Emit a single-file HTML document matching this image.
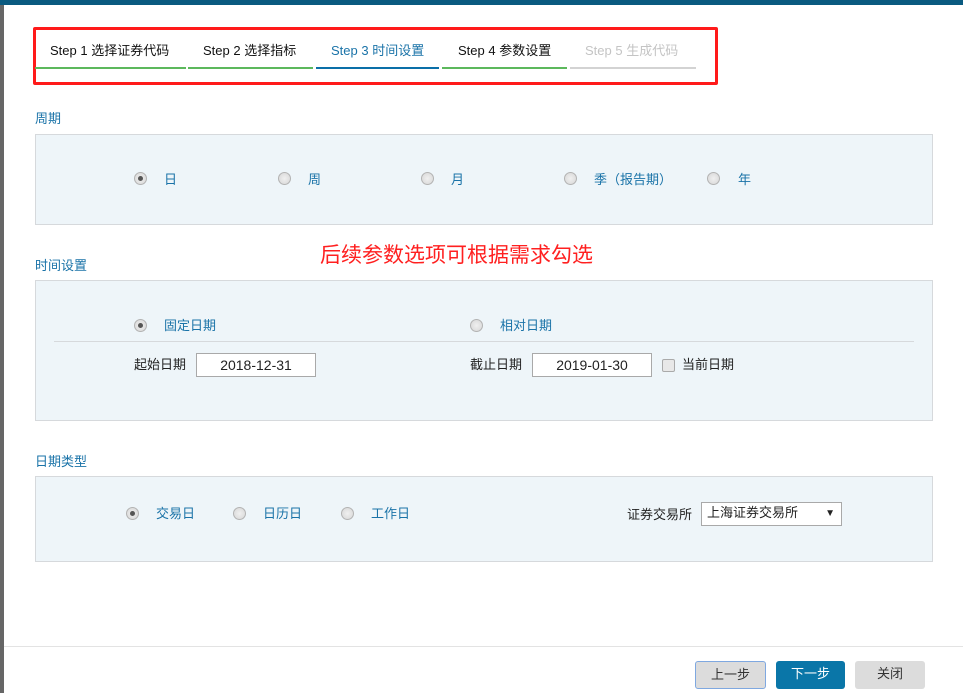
<!DOCTYPE html>
<html><head><meta charset="utf-8"><style>
*{margin:0;padding:0;box-sizing:border-box}
body{width:963px;height:693px;position:relative;background:#fff;font-family:"Liberation Sans","Noto Sans CJK SC",sans-serif;font-size:13px;color:#222;overflow:hidden}
.a{position:absolute;white-space:nowrap}
.blue{color:#1a73a8}
.panel{position:absolute;left:35px;width:898px;background:#eef5f9;border:1px solid #d6d9dc}
.r{position:absolute;width:13px;height:13px;border-radius:50%;border:1px solid #b3b3b3;background:radial-gradient(circle,#f0f0f0,#d6d6d6)}
.r.on::after{content:"";position:absolute;left:3px;top:3px;width:5px;height:5px;border-radius:50%;background:#555}
.inp{position:absolute;height:24px;border:1px solid #a9a9a9;background:#fff;text-align:center;line-height:22px;font-size:14px}
.btn{position:absolute;top:661px;height:28px;border-radius:3px;text-align:center;line-height:26px;font-size:13px}
.seg{position:absolute;top:67px;height:2px}
</style></head><body>
<div class="a" style="left:0;top:0;width:963px;height:5px;background:#0a5a80"></div>
<div class="a" style="left:0;top:5px;width:4px;height:688px;background:#666"></div>

<div class="a" style="left:33px;top:27px;width:685px;height:58px;border:3px solid #ff1a1a;border-radius:2px"></div>
<div class="a" style="left:50px;top:40px;font-size:13px;color:#111">Step 1 选择证券代码</div>
<div class="a" style="left:203px;top:40px;font-size:13px;color:#111">Step 2 选择指标</div>
<div class="a" style="left:331px;top:40px;font-size:13px;color:#1a73a8">Step 3 时间设置</div>
<div class="a" style="left:458px;top:40px;font-size:13px;color:#111">Step 4 参数设置</div>
<div class="a" style="left:585px;top:40px;font-size:13px;color:#c4c4c4">Step 5 生成代码</div>
<div class="seg" style="left:35px;width:151px;background:#5cb85c"></div>
<div class="seg" style="left:188px;width:125px;background:#5cb85c"></div>
<div class="seg" style="left:316px;width:123px;background:#0a6fa8"></div>
<div class="seg" style="left:442px;width:125px;background:#5cb85c"></div>
<div class="seg" style="left:570px;width:126px;background:#d3d3d3"></div>

<div class="a blue" style="left:35px;top:108px">周期</div>
<div class="panel" style="top:134px;height:91px"></div>
<div class="r on" style="left:134px;top:172px"></div><div class="a blue" style="left:164px;top:169px">日</div>
<div class="r" style="left:278px;top:172px"></div><div class="a blue" style="left:308px;top:169px">周</div>
<div class="r" style="left:421px;top:172px"></div><div class="a blue" style="left:451px;top:169px">月</div>
<div class="r" style="left:564px;top:172px"></div><div class="a blue" style="left:594px;top:169px">季（报告期）</div>
<div class="r" style="left:707px;top:172px"></div><div class="a blue" style="left:738px;top:169px">年</div>

<div class="a" style="left:320px;top:239px;font-size:21px;color:#ff2020">后续参数选项可根据需求勾选</div>

<div class="a blue" style="left:35px;top:255px">时间设置</div>
<div class="panel" style="top:280px;height:141px"></div>
<div class="r on" style="left:134px;top:319px"></div><div class="a blue" style="left:164px;top:315px">固定日期</div>
<div class="r" style="left:470px;top:319px"></div><div class="a blue" style="left:500px;top:315px">相对日期</div>
<div class="a" style="left:54px;top:341px;width:860px;height:1px;background:#d6d9dc"></div>
<div class="a" style="left:134px;top:354px">起始日期</div>
<div class="inp" style="left:196px;top:353px;width:120px">2018-12-31</div>
<div class="a" style="left:470px;top:354px">截止日期</div>
<div class="inp" style="left:532px;top:353px;width:120px">2019-01-30</div>
<div class="a" style="left:662px;top:359px;width:13px;height:13px;border:1px solid #aaa;border-radius:2px;background:#e8e8e8"></div>
<div class="a" style="left:682px;top:354px">当前日期</div>

<div class="a blue" style="left:35px;top:451px">日期类型</div>
<div class="panel" style="top:476px;height:86px"></div>
<div class="r on" style="left:126px;top:507px"></div><div class="a blue" style="left:156px;top:503px">交易日</div>
<div class="r" style="left:233px;top:507px"></div><div class="a blue" style="left:263px;top:503px">日历日</div>
<div class="r" style="left:341px;top:507px"></div><div class="a blue" style="left:371px;top:503px">工作日</div>
<div class="a" style="left:627px;top:504px">证券交易所</div>
<div class="a" style="left:701px;top:502px;width:141px;height:24px;border:1px solid #a9a9a9;background:#fff;padding-left:5px;line-height:20px;font-size:13px">上海证券交易所<span style="position:absolute;right:6px;top:1px;font-size:10px">▼</span></div>

<div class="a" style="left:4px;top:646px;width:959px;height:1px;background:#e3e3e3"></div>
<div class="btn" style="left:695px;width:71px;background:#dcdcdc;border:1px solid #7fa8e0;color:#333">上一步</div>
<div class="btn" style="left:776px;width:69px;background:#0a76a8;color:#fff">下一步</div>
<div class="btn" style="left:855px;width:70px;background:#dcdcdc;color:#333">关闭</div>
</body></html>
